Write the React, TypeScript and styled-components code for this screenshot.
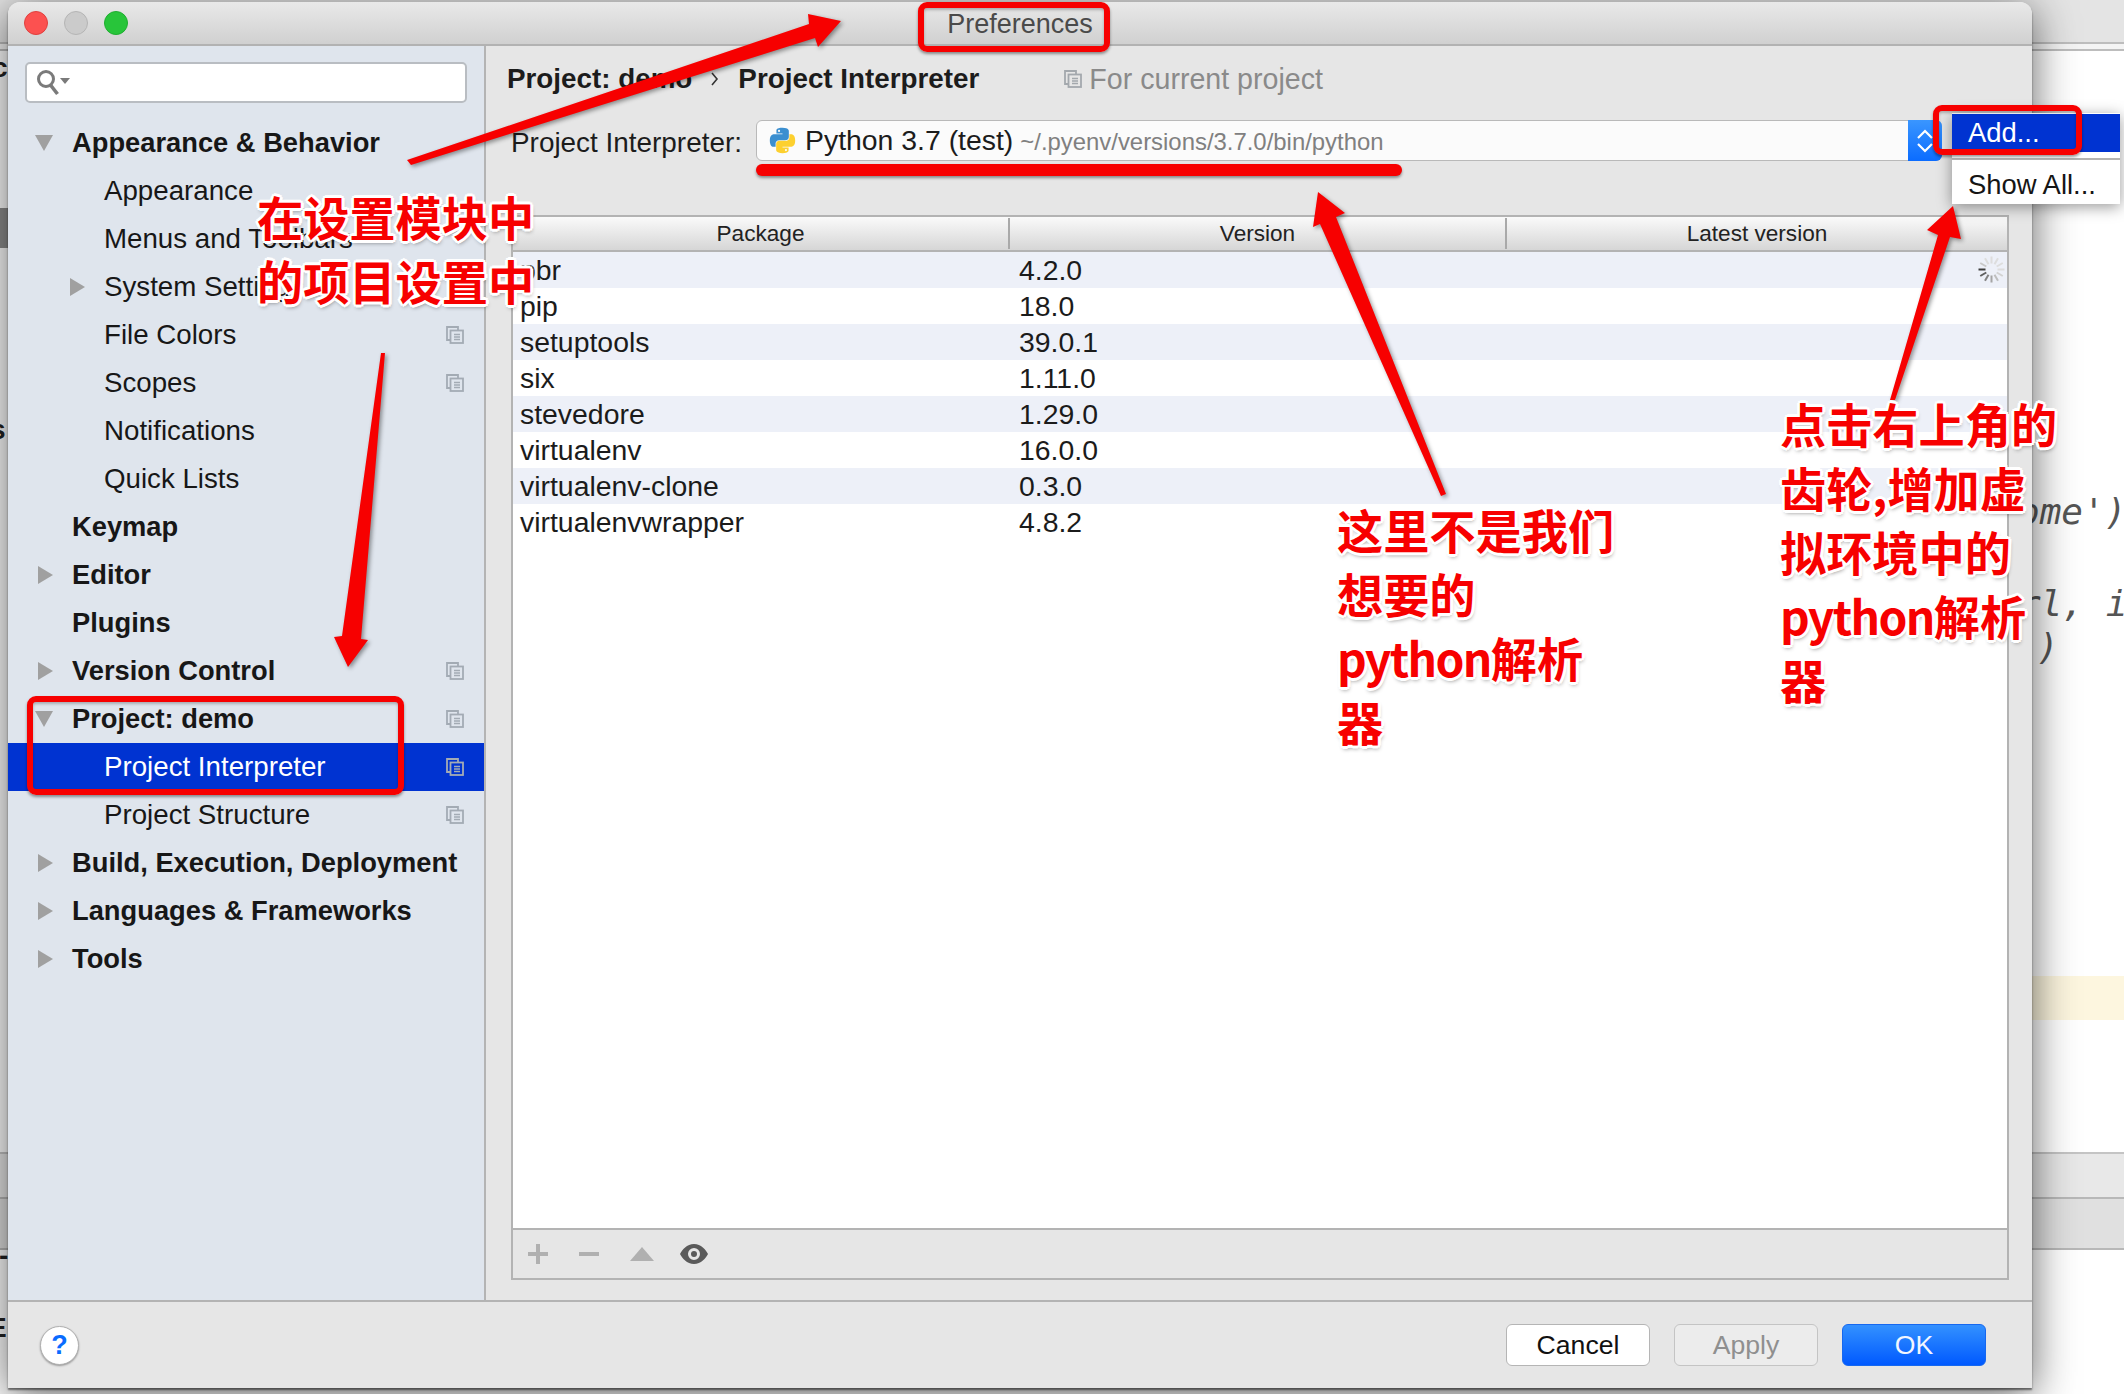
import React from "react";
import styled, { createGlobalStyle } from "styled-components";

const Global = createGlobalStyle`
  html, body { margin: 0; padding: 0; background: #fff; }
  body { font-family: "Liberation Sans", Arial, sans-serif; color: #1c1c1c; }
  * { box-sizing: border-box; }
`;

const Desktop = styled.div`
  position: relative;
  width: 2124px;
  height: 1394px;
  overflow: hidden;
  background: #fff;
`;

const PeekTop = styled.div`
  position: absolute;
  left: 0;
  right: 0;
  top: 0;
  height: 51px;
  background: linear-gradient(#e4e4e4 0 42px, #bdbdbd 42px 44px, #f4f4f4 44px 49px, #bdbdbd 49px);
`;
const PeekBottom = styled.div`
  position: absolute;
  left: 0;
  right: 0;
  top: 1152px;
  height: 98px;
  background: linear-gradient(#e8e8e8 0 43px, #b8b8b8 43px 45px, #e0e0e0 45px);
  border-top: 2px solid #c4c4c4;
  border-bottom: 2px solid #b8b8b8;
`;
const PeekHighlight = styled.div`
  position: absolute;
  left: 2032px;
  right: 0;
  top: 976px;
  height: 44px;
  background: #fdf6df;
`;
const PeekSide = styled.div`
  position: absolute;
  left: 0;
  width: 8px;
  top: 208px;
  height: 40px;
  background: #8e8e8e;
`;
const PeekCode = styled.div<{ $x: number; $y: number }>`
  position: absolute;
  left: ${(p) => p.$x}px;
  top: ${(p) => p.$y}px;
  font: italic 36px/44px "DejaVu Sans Mono", "Liberation Mono", monospace;
  color: #555;
  white-space: pre;
`;
const PeekBit = styled.div<{ $x: number; $y: number }>`
  position: absolute;
  left: ${(p) => p.$x}px;
  top: ${(p) => p.$y}px;
  font: 700 28px/32px "Liberation Sans", sans-serif;
  color: #222;
  white-space: pre;
`;

const Window = styled.div`
  position: absolute;
  left: 8px;
  top: 2px;
  width: 2024px;
  height: 1386px;
  display: flex;
  flex-direction: column;
  background: #e6e6e6;
  border-radius: 12px 12px 0 0;
  box-shadow: 0 8px 44px rgba(0, 0, 0, 0.62), 0 2px 2px rgba(0, 0, 0, 0.5);
`;

const TitleBar = styled.div`
  height: 44px;
  flex: none;
  display: grid;
  grid-template-columns: 1fr auto 1fr;
  align-items: center;
  padding: 0 16px;
  background: linear-gradient(#e9e9e9, #d0d0d0);
  border-bottom: 2px solid #b2b2b2;
  border-radius: 12px 12px 0 0;
`;
const Lights = styled.div`
  display: flex;
  gap: 16px;
`;
const Light = styled.span<{ $c: string; $b: string }>`
  width: 24px;
  height: 24px;
  border-radius: 50%;
  background: ${(p) => p.$c};
  border: 1px solid ${(p) => p.$b};
`;
const Title = styled.div`
  font-size: 27px;
  color: #4a4a4a;
  padding-top: 2px;
`;

const Body = styled.div`
  flex: 1;
  min-height: 0;
  display: flex;
`;

const Sidebar = styled.div`
  width: 476px;
  flex: none;
  background: #dfe5ed;
  padding-top: 16px;
`;
const Search = styled.div`
  margin: 0 17px;
  height: 41px;
  background: #fff;
  border: 2px solid #b9bdc2;
  border-radius: 5px;
  display: flex;
  align-items: center;
  padding-left: 9px;
`;
const Tree = styled.div`
  margin-top: 16px;
`;
const Row = styled.div<{ $sub?: boolean; $bold?: boolean; $active?: boolean }>`
  height: 48px;
  display: flex;
  align-items: center;
  padding-left: ${(p) => (p.$sub ? 59 : 27)}px;
  padding-right: 20px;
  font-size: ${(p) => (p.$bold ? 27.3 : 27.7)}px;
  font-weight: ${(p) => (p.$bold ? 700 : 400)};
  color: ${(p) => (p.$active ? "#fff" : "#171717")};
  background: ${(p) => (p.$active ? "#0033d1" : "transparent")};
`;
const Slot = styled.span`
  width: 37px;
  flex: none;
  display: flex;
  align-items: center;
`;
const TriRightIcon = styled.svg`
  margin-left: 3px;
`;
const RowLabel = styled.span`
  flex: 1;
  white-space: nowrap;
`;

const Main = styled.div`
  flex: 1;
  min-width: 0;
  border-left: 2px solid #b4b4b4;
  padding: 0 23px 20px 25px;
  display: flex;
  flex-direction: column;
`;
const Crumbs = styled.div`
  height: 66px;
  flex: none;
  display: flex;
  align-items: center;
  margin-left: -4px;
  font-size: 27.8px;
  font-weight: 700;
`;
const CrumbSep = styled.span`
  width: 46px;
  display: flex;
  justify-content: center;
`;
const Scope = styled.span`
  margin-left: 85px;
  display: flex;
  align-items: center;
  gap: 7px;
  font-size: 28.6px;
  font-weight: 400;
  color: #8a8a8a;
`;
const InterpRow = styled.div`
  margin-top: 8px;
  height: 41px;
  flex: none;
  display: flex;
  align-items: center;
`;
const InterpLabel = styled.span`
  width: 245px;
  flex: none;
  font-size: 27.9px;
  padding-top: 5px;
  white-space: nowrap;
`;
const Combo = styled.div`
  width: 1186px;
  height: 41px;
  display: flex;
  align-items: stretch;
  background: #fbfbfb;
  border: 1px solid #b9b9b9;
  border-radius: 6px;
`;
const ComboText = styled.div`
  flex: 1;
  display: flex;
  align-items: center;
  padding-left: 11px;
  white-space: nowrap;
`;
const ComboName = styled.span`
  margin-left: 8px;
  font-size: 28.4px;
`;
const ComboPath = styled.span`
  margin-left: 7px;
  font-size: 23.9px;
  color: #808080;
  padding-top: 2px;
`;
const ComboArrows = styled.div`
  width: 34px;
  margin: -1px;
  display: flex;
  align-items: center;
  justify-content: center;
  background: linear-gradient(#3a96ff, #0b6cff);
  border-radius: 0 6px 6px 0;
`;

const Table = styled.div`
  margin-top: 54px;
  flex: 1;
  min-height: 0;
  display: flex;
  flex-direction: column;
  border: 2px solid #b3b3b3;
`;
const Head = styled.div`
  height: 35px;
  flex: none;
  display: grid;
  grid-template-columns: 497px 497px 1fr;
  align-items: center;
  background: linear-gradient(#fafafa, #d6d6d6);
  border-bottom: 2px solid #b3b3b3;
  font-size: 22.6px;
  color: #222;
`;
const HeadCell = styled.div<{ $line?: boolean }>`
  height: 31px;
  line-height: 31px;
  text-align: center;
  border-right: ${(p) => (p.$line ? "2px solid #a9a9a9" : "none")};
`;
const Rows = styled.div`
  flex: 1;
  min-height: 0;
  background: #fff;
`;
const PkgRow = styled.div<{ $tint: boolean }>`
  position: relative;
  height: 36px;
  display: grid;
  grid-template-columns: 497px 1fr;
  align-items: center;
  font-size: 28.4px;
  color: #1b1b1b;
  background: ${(p) => (p.$tint ? "#edf0f8" : "#fff")};
`;
const PkgName = styled.span`
  padding-left: 7px;
`;
const PkgVer = styled.span`
  padding-left: 9px;
`;
const Spinner = styled.svg`
  position: absolute;
  right: 2px;
  top: 4px;
`;
const Tools = styled.div`
  height: 50px;
  flex: none;
  display: flex;
  align-items: center;
  gap: 31px;
  padding-left: 15px;
  border-top: 2px solid #b3b3b3;
`;
const EyeIcon = styled.svg`
  margin-left: -5px;
`;

const Footer = styled.div`
  height: 88px;
  flex: none;
  display: flex;
  align-items: center;
  border-top: 2px solid #b3b3b3;
  padding: 0 46px 0 32px;
`;
const Help = styled.div`
  width: 39px;
  height: 39px;
  border-radius: 50%;
  background: #fff;
  border: 1px solid #b0b0b0;
  box-shadow: 0 1px 2px rgba(0, 0, 0, 0.35);
  display: flex;
  align-items: center;
  justify-content: center;
  color: #0a6cff;
  font-size: 27px;
  font-weight: 700;
`;
const Buttons = styled.div`
  margin-left: auto;
  display: flex;
  gap: 24px;
`;
const Button = styled.div<{ $kind: "plain" | "off" | "main" }>`
  width: 144px;
  height: 42px;
  border-radius: 6px;
  display: flex;
  align-items: center;
  justify-content: center;
  font-size: 26.6px;
  color: ${(p) => (p.$kind === "plain" ? "#111" : p.$kind === "off" ? "#8f8f8f" : "#f2f6ff")};
  background: ${(p) =>
    p.$kind === "plain"
      ? "#fff"
      : p.$kind === "off"
      ? "#ececec"
      : "linear-gradient(#3391ff, #0059ff)"};
  border: 1px solid
    ${(p) => (p.$kind === "plain" ? "#b5b5b5" : p.$kind === "off" ? "#c4c4c4" : "#1668f0")};
`;

const Menu = styled.div`
  position: absolute;
  left: 1952px;
  top: 113px;
  width: 168px;
  height: 91px;
  padding-top: 1px;
  background: #fff;
  box-shadow: 0 3px 14px rgba(0, 0, 0, 0.4);
  font-size: 27.4px;
`;
const MenuItem = styled.div<{ $on?: boolean }>`
  height: ${(p) => (p.$on ? 38 : 44)}px;
  display: flex;
  align-items: center;
  padding-left: 16px;
  padding-top: ${(p) => (p.$on ? 0 : 5)}px;
  color: ${(p) => (p.$on ? "#fff" : "#151515")};
  background: ${(p) => (p.$on ? "#0033d1" : "#fff")};
`;
const MenuRule = styled.div`
  margin-top: 6px;
  height: 2px;
  background: #b3b3b3;
`;

const RedBox = styled.div<{ $x: number; $y: number; $w: number; $h: number }>`
  position: absolute;
  left: ${(p) => p.$x}px;
  top: ${(p) => p.$y}px;
  width: ${(p) => p.$w}px;
  height: ${(p) => p.$h}px;
  border: 6px solid #f70000;
  border-radius: 9px;
  box-shadow: 0 2px 3px rgba(0, 0, 0, 0.4), inset 0 2px 3px rgba(0, 0, 0, 0.25);
`;
const RedLine = styled.div`
  position: absolute;
  left: 756px;
  top: 164px;
  width: 646px;
  height: 12px;
  border-radius: 6px;
  background: #f70000;
  box-shadow: 0 2px 3px rgba(0, 0, 0, 0.4);
`;
const Arrows = styled.svg`
  position: absolute;
  left: 0;
  top: 0;
  filter: drop-shadow(2px 2px 2px rgba(0, 0, 0, 0.4));
`;
const Note = styled.div<{ $x: number; $y: number }>`
  position: absolute;
  left: ${(p) => p.$x}px;
  top: ${(p) => p.$y}px;
  font-family: "Noto Sans CJK SC", "Liberation Sans", sans-serif;
  font-size: 46.2px;
  font-weight: 700;
  line-height: 64px;
  color: #f70000;
  white-space: pre;
  -webkit-text-stroke: 0.6px #f70000;
  paint-order: stroke fill;
  text-shadow: 3px 0 0 #fff, -3px 0 0 #fff, 0 3px 0 #fff, 0 -3px 0 #fff, 2px 2px 0 #fff,
    -2px 2px 0 #fff, 2px -2px 0 #fff, -2px -2px 0 #fff, 1px 3px 4px rgba(0, 0, 0, 0.45);
`;
const NoteLatin = styled.span`
  letter-spacing: -1.6px;
`;

const CopyIcon = ({ c = "#a3abb4" }: { c?: string }) => (
  <svg width="18" height="18" viewBox="0 0 18 18" fill="none" stroke={c} strokeWidth="1.8">
    <path d="M4 14H1V1h11v3" />
    <rect x="4.5" y="4.5" width="12.5" height="12.5" />
    <path d="M8 8.5h6M8 11h6M8 13.5h6" strokeWidth="1.4" />
  </svg>
);
const TriDown = () => (
  <svg width="18" height="16" viewBox="0 0 18 16">
    <path d="M0 0h18L9 16z" fill="#a0a0a0" />
  </svg>
);
const TriRight = () => (
  <TriRightIcon width="15" height="18" viewBox="0 0 15 18">
    <path d="M0 0l15 9-15 9z" fill="#a0a0a0" />
  </TriRightIcon>
);
const SearchIcon = () => (
  <svg width="36" height="26" viewBox="0 0 36 26" fill="none">
    <circle cx="10" cy="9" r="7.5" stroke="#7a7a7a" strokeWidth="3" />
    <path d="M14.5 15l7 9" stroke="#7a7a7a" strokeWidth="3.6" />
    <path d="M24 8h10l-5 6z" fill="#7a7a7a" />
  </svg>
);
const Python = () => (
  <svg width="29" height="29" viewBox="0 0 32 32">
    <path
      fill="#3b8fd0"
      d="M15.9 2c-7 0-6.6 3-6.6 3v3.2h6.7v1H6.6S2 8.7 2 16s4 7 4 7h2.4v-3.4s-.1-4 4-4h6.8s3.8.1 3.8-3.7V5.7S23.6 2 15.9 2zm-3.7 2.2a1.2 1.2 0 110 2.4 1.2 1.2 0 010-2.4z"
    />
    <path
      fill="#fdd02f"
      d="M16.1 30c7 0 6.6-3 6.6-3v-3.2h-6.7v-1h9.4s4.6.5 4.6-6.8-4-7-4-7h-2.4v3.4s.1 4-4 4h-6.8s-3.8-.1-3.8 3.7v6.2S8.4 30 16.1 30zm3.7-2.2a1.2 1.2 0 110-2.4 1.2 1.2 0 010 2.4z"
    />
  </svg>
);

const SpinnerIcon = () => {
  const shades = [221, 221, 221, 221, 210, 190, 165, 130, 95, 60, 200, 221];
  return (
    <Spinner width="27" height="27" viewBox="-13.5 -13.5 27 27">
      {shades.map((shade, i) => (
        <line
          key={i}
          x1="0"
          y1="-6"
          x2="0"
          y2="-13"
          strokeWidth="2"
          stroke={`rgb(${shade},${shade},${shade})`}
          transform={`rotate(${i * 30})`}
        />
      ))}
    </Spinner>
  );
};

const tree: { t: string; sub?: boolean; bold?: boolean; tri?: "d" | "r"; copy?: boolean; active?: boolean }[] = [
  { t: "Appearance & Behavior", bold: true, tri: "d" },
  { t: "Appearance", sub: true },
  { t: "Menus and Toolbars", sub: true },
  { t: "System Settings", sub: true, tri: "r" },
  { t: "File Colors", sub: true, copy: true },
  { t: "Scopes", sub: true, copy: true },
  { t: "Notifications", sub: true },
  { t: "Quick Lists", sub: true },
  { t: "Keymap", bold: true },
  { t: "Editor", bold: true, tri: "r" },
  { t: "Plugins", bold: true },
  { t: "Version Control", bold: true, tri: "r", copy: true },
  { t: "Project: demo", bold: true, tri: "d", copy: true },
  { t: "Project Interpreter", sub: true, copy: true, active: true },
  { t: "Project Structure", sub: true, copy: true },
  { t: "Build, Execution, Deployment", bold: true, tri: "r" },
  { t: "Languages & Frameworks", bold: true, tri: "r" },
  { t: "Tools", bold: true, tri: "r" },
];

const packages = [
  ["pbr", "4.2.0"],
  ["pip", "18.0"],
  ["setuptools", "39.0.1"],
  ["six", "1.11.0"],
  ["stevedore", "1.29.0"],
  ["virtualenv", "16.0.0"],
  ["virtualenv-clone", "0.3.0"],
  ["virtualenvwrapper", "4.8.2"],
];

export default function App() {
  return (
    <Desktop>
      <Global />
      <PeekTop />
      <PeekBottom />
      <PeekHighlight />
      <PeekSide />
      <PeekBit $x={-8} $y={52}>c</PeekBit>
      <PeekBit $x={-10} $y={414}>s</PeekBit>
      <PeekBit $x={-1} $y={1240}>-</PeekBit>
      <PeekBit $x={-12} $y={1312}>E</PeekBit>
      <PeekCode $x={2018} $y={490}>{"ome')"}</PeekCode>
      <PeekCode $x={2019} $y={582}>{"rl, i"}</PeekCode>
      <PeekCode $x={2037} $y={625}>{")"}</PeekCode>

      <Window>
        <TitleBar>
          <Lights>
            <Light $c="#fc5150" $b="#e0403e" />
            <Light $c="#cbcbcb" $b="#b5b5b5" />
            <Light $c="#28c53a" $b="#1fae30" />
          </Lights>
          <Title>Preferences</Title>
          <span />
        </TitleBar>
        <Body>
          <Sidebar>
            <Search>
              <SearchIcon />
            </Search>
            <Tree>
              {tree.map((r) => (
                <Row key={r.t} $sub={r.sub} $bold={r.bold} $active={r.active}>
                  <Slot>
                    {r.tri === "d" && <TriDown />}
                    {r.tri === "r" && <TriRight />}
                  </Slot>
                  <RowLabel>{r.t}</RowLabel>
                  {r.copy && <CopyIcon />}
                </Row>
              ))}
            </Tree>
          </Sidebar>
          <Main>
            <Crumbs>
              <span>Project: demo</span>
              <CrumbSep>
                <svg width="8" height="16" viewBox="0 0 8 16" fill="none" stroke="#333" strokeWidth="1.6">
                  <path d="M1 2l5 6-5 6" />
                </svg>
              </CrumbSep>
              <span>Project Interpreter</span>
              <Scope>
                <CopyIcon c="#a3a8ad" />
                For current project
              </Scope>
            </Crumbs>
            <InterpRow>
              <InterpLabel>Project Interpreter:</InterpLabel>
              <Combo>
                <ComboText>
                  <Python />
                  <ComboName>Python 3.7 (test)</ComboName>
                  <ComboPath>~/.pyenv/versions/3.7.0/bin/python</ComboPath>
                </ComboText>
                <ComboArrows>
                  <svg width="16" height="24" viewBox="0 0 16 24" fill="none" stroke="#fff" strokeWidth="2.2">
                    <path d="M1 9l7-7 7 7M1 15l7 7 7-7" />
                  </svg>
                </ComboArrows>
              </Combo>
            </InterpRow>
            <Table>
              <Head>
                <HeadCell $line>Package</HeadCell>
                <HeadCell $line>Version</HeadCell>
                <HeadCell>Latest version</HeadCell>
              </Head>
              <Rows>
                {packages.map(([n, v], i) => (
                  <PkgRow key={n} $tint={i % 2 === 0 && i < 7}>
                    <PkgName>{n}</PkgName>
                    <PkgVer>{v}</PkgVer>
                    {i === 0 && <SpinnerIcon />}
                  </PkgRow>
                ))}
              </Rows>
              <Tools>
                <svg width="20" height="20" viewBox="0 0 20 20" fill="#b0b0b0">
                  <path d="M8 0h4v8h8v4h-8v8H8v-8H0V8h8z" />
                </svg>
                <svg width="20" height="20" viewBox="0 0 20 20" fill="#b0b0b0">
                  <path d="M0 8h20v4H0z" />
                </svg>
                <svg width="24" height="14" viewBox="0 0 24 14" fill="#b0b0b0">
                  <path d="M12 0l12 14H0z" />
                </svg>
                <EyeIcon width="28" height="20" viewBox="0 0 28 20">
                  <path
                    fillRule="evenodd"
                    fill="#5a5a5a"
                    d="M14 0c7 0 12 6 14 10-2 4-7 10-14 10S2 14 0 10C2 6 7 0 14 0zm0 4a6 6 0 100 12 6 6 0 000-12zm0 3a3 3 0 110 6 3 3 0 010-6z"
                  />
                </EyeIcon>
              </Tools>
            </Table>
          </Main>
        </Body>
        <Footer>
          <Help>?</Help>
          <Buttons>
            <Button $kind="plain">Cancel</Button>
            <Button $kind="off">Apply</Button>
            <Button $kind="main">OK</Button>
          </Buttons>
        </Footer>
      </Window>

      <Menu>
        <MenuItem $on>Add...</MenuItem>
        <MenuRule />
        <MenuItem>Show All...</MenuItem>
      </Menu>

      <Arrows width="2124" height="1394" viewBox="0 0 2124 1394">
        <g fill="#f70000">
          <path d="M407 160L809 24 808 14 841 21 818 47 815 38 411 165z" />
          <path d="M381 353L385 353 361 639 368 640 348 667 334 637 342 636z" />
          <path d="M1446 494L1441 496 1320 224 1313 227 1318 192 1345 213 1336 217z" />
          <path d="M1890 400L1895 400 1950 237 1961 239 1953 206 1927 230 1938 235z" />
        </g>
      </Arrows>

      <RedBox $x={918} $y={2} $w={192} $h={50} />
      <RedBox $x={27} $y={696} $w={377} $h={99} />
      <RedBox $x={1933} $y={105} $w={149} $h={50} />
      <RedLine />

      <Note $x={257} $y={184}>{"在设置模块中\n的项目设置中"}</Note>
      <Note $x={1337} $y={497}>
        {"这里不是我们\n想要的\n"}
        <NoteLatin>python</NoteLatin>
        {"解析\n器"}
      </Note>
      <Note $x={1780} $y={391}>
        {"点击右上角的\n齿轮,增加虚\n拟环境中的\n"}
        <NoteLatin>python</NoteLatin>
        {"解析\n器"}
      </Note>
    </Desktop>
  );
}
